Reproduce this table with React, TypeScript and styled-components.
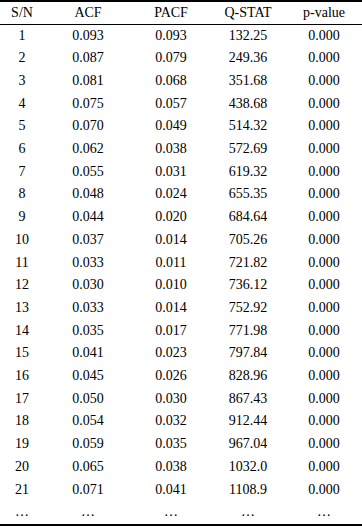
import React from 'react'
import styled, { createGlobalStyle } from 'styled-components'

const GlobalStyle = createGlobalStyle`
  html, body {
    margin: 0;
    padding: 0;
    background: #ffffff;
  }
`

const Table = styled('table')`
  width: 362px;
  border-collapse: collapse;
  table-layout: fixed;
  font-family: "Liberation Serif", "Times New Roman", serif;
  font-size: 14px;
  color: #000000;
  border-top: 2px solid #000000;
  border-bottom: 2px solid #000000;
`

const HeadRow = styled('tr')`
  height: 23px;
  border-bottom: 1px solid #000000;
`

const BodyRow = styled('tr')`
  height: 22.7px;
`

interface ICell {
  width?: number
}

const HeadCell = styled('th')<ICell>`
  font-weight: normal;
  text-align: center;
  padding: 0;
  width: ${(props) => (props.width ? props.width + 'px' : 'auto')};
`

const Cell = styled('td')`
  text-align: center;
  padding: 0;
  line-height: 22.7px;
`

const widths = [44, 88, 78, 76, 76]
const headers = ['S/N', 'ACF', 'PACF', 'Q-STAT', 'p-value']

const rows: string[][] = [
  ['1', '0.093', '0.093', '132.25', '0.000'],
  ['2', '0.087', '0.079', '249.36', '0.000'],
  ['3', '0.081', '0.068', '351.68', '0.000'],
  ['4', '0.075', '0.057', '438.68', '0.000'],
  ['5', '0.070', '0.049', '514.32', '0.000'],
  ['6', '0.062', '0.038', '572.69', '0.000'],
  ['7', '0.055', '0.031', '619.32', '0.000'],
  ['8', '0.048', '0.024', '655.35', '0.000'],
  ['9', '0.044', '0.020', '684.64', '0.000'],
  ['10', '0.037', '0.014', '705.26', '0.000'],
  ['11', '0.033', '0.011', '721.82', '0.000'],
  ['12', '0.030', '0.010', '736.12', '0.000'],
  ['13', '0.033', '0.014', '752.92', '0.000'],
  ['14', '0.035', '0.017', '771.98', '0.000'],
  ['15', '0.041', '0.023', '797.84', '0.000'],
  ['16', '0.045', '0.026', '828.96', '0.000'],
  ['17', '0.050', '0.030', '867.43', '0.000'],
  ['18', '0.054', '0.032', '912.44', '0.000'],
  ['19', '0.059', '0.035', '967.04', '0.000'],
  ['20', '0.065', '0.038', '1032.0', '0.000'],
  ['21', '0.071', '0.041', '1108.9', '0.000'],
  ['…', '…', '…', '…', '…'],
]

export default function App() {
  return (
    <>
      <GlobalStyle />
      <Table>
        <thead>
          <HeadRow>
            {headers.map((h, i) => (
              <HeadCell key={h} width={widths[i]}>{h}</HeadCell>
            ))}
          </HeadRow>
        </thead>
        <tbody>
          {rows.map((r, i) => (
            <BodyRow key={i}>
              {r.map((c, j) => (
                <Cell key={j}>{c}</Cell>
              ))}
            </BodyRow>
          ))}
        </tbody>
      </Table>
    </>
  )
}
